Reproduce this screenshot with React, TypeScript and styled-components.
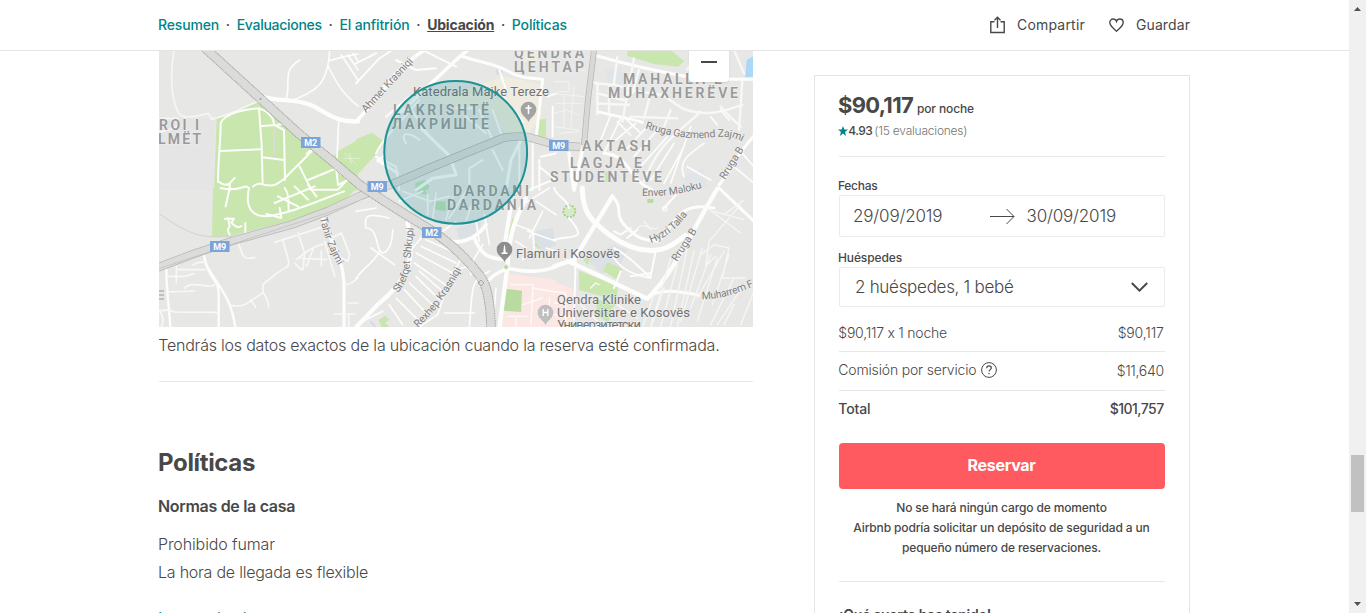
import React from "react";
import styled, { createGlobalStyle } from "styled-components";

const GlobalStyle = createGlobalStyle`
  *, *::before, *::after { box-sizing: border-box; }
  body {
    margin: 0;
    overflow: hidden;
    background: #fff;
    color: #484848;
    font-family: Inter, "Liberation Sans", sans-serif;
    font-feature-settings: "calt" 0;
  }
  h2, h3, p { margin: 0; }
`;

/* ---------- Frame ---------- */

const Screen = styled.div`
  display: grid;
  grid-template-columns: 1349px 17px;
  height: 613px;
  overflow: hidden;
`;

const Page = styled.div`
  display: flex;
  flex-direction: column;
  height: 613px;
  overflow: hidden;
`;

const ScrollTrack = styled.div`
  display: flex;
  flex-direction: column;
  align-items: center;
  background: #f0f0f0;
`;

const ScrollThumb = styled.div`
  width: 13px;
  height: 57px;
  margin: 438px 0 84px;
  background: #c1c1c1;
`;

const ScrollArrow = styled.svg`
  display: block;
  width: 17px;
  height: 17px;
  fill: #505050;
`;

/* ---------- Header ---------- */

const Header = styled.header`
  display: flex;
  justify-content: space-between;
  align-items: center;
  flex: none;
  height: 51px;
  padding: 0 159px 0 158px;
  border-bottom: 1px solid #e4e4e4;
`;

const Nav = styled.nav`
  display: flex;
  font-size: 14px;
  line-height: 20px;
`;

const NavLink = styled.a<{ $active?: boolean; $ls: number }>`
  color: ${(p) => (p.$active ? "#484848" : "#008489")};
  font-weight: ${(p) => (p.$active ? 700 : 500)};
  text-decoration: ${(p) => (p.$active ? "underline" : "none")};
  text-underline-offset: 1px;
  letter-spacing: ${(p) => p.$ls}px;
`;

const Dot = styled.span`
  width: 17.7px;
  text-align: center;
  font-weight: 500;
`;

const Actions = styled.div`
  display: flex;
  gap: 24px;
`;

const Action = styled.button<{ $ls: number }>`
  display: flex;
  align-items: center;
  gap: 12px;
  padding: 0;
  border: 0;
  background: none;
  color: #484848;
  font: 400 14px/20px Inter, "Liberation Sans", sans-serif;
  letter-spacing: ${(p) => p.$ls}px;
`;

const ActionIcon = styled.svg`
  display: block;
  width: 15px;
  height: 18px;
  fill: none;
  stroke: #484848;
  stroke-width: 1.4;
`;

/* ---------- Main column ---------- */

const Content = styled.main`
  display: grid;
  grid-template-columns: 594px 376px;
  column-gap: 61px;
  align-items: start;
  padding-left: 159px;
`;

const Column = styled.section`
  display: flex;
  flex-direction: column;
`;

const MapFrame = styled.div`
  position: relative;
  height: 276px;
  overflow: hidden;
`;

const MapSvg = styled.svg`
  display: block;
  width: 594px;
  height: 276px;
`;

const ZoomOut = styled.button`
  position: absolute;
  top: -9px;
  left: 530px;
  display: grid;
  place-items: center;
  width: 40px;
  height: 40px;
  padding: 0;
  border: 0;
  border-radius: 4px;
  background: #fff;
  box-shadow: 0 1px 2px rgba(0, 0, 0, 0.1);

  &::before {
    content: "";
    width: 16px;
    height: 2px;
    background: #484848;
  }
`;

const Caption = styled.p`
  margin: 6px 0 0 -0.8px;
  font-size: 16px;
  font-weight: 300;
  line-height: 24px;
  letter-spacing: -0.21px;
  white-space: nowrap;
`;

const Divider = styled.hr<{ $top: number; $bottom: number }>`
  width: 100%;
  height: 1px;
  margin: ${(p) => p.$top}px 0 ${(p) => p.$bottom}px;
  border: 0;
  background: #e8e8e8;
`;

const Policies = styled.div`
  display: flex;
  flex-direction: column;
  margin-left: -1px;
`;

const SectionTitle = styled.h2`
  font-size: 24px;
  font-weight: 700;
  line-height: 32px;
  letter-spacing: -0.34px;
`;

const SubTitle = styled.h3`
  margin: 15px 0 12px;
  font-size: 16px;
  font-weight: 600;
  line-height: 24px;
  letter-spacing: -0.31px;
`;

const Rule = styled.p<{ $ls: number }>`
  font-size: 16px;
  font-weight: 300;
  line-height: 28px;
  letter-spacing: ${(p) => p.$ls}px;
`;

const MoreLink = styled.a`
  margin-top: 20px;
  color: #008489;
  font-size: 16px;
  line-height: 24px;
`;

/* ---------- Booking card ---------- */

const Card = styled.aside`
  display: flex;
  flex-direction: column;
  height: 700px;
  margin-top: 24px;
  padding: 14px 24px;
  border: 1px solid #e4e4e4;
`;

const PriceLine = styled.div`
  display: flex;
  align-items: baseline;
  gap: 4px;
  height: 30px;
  margin-left: -1px;
  line-height: 30px;
  font-size: 12px;
  font-weight: 500;
  letter-spacing: -0.13px;
`;

const Price = styled.strong`
  font-size: 22px;
  font-weight: 700;
  letter-spacing: -0.72px;
`;

const Rating = styled.div`
  display: flex;
  align-items: center;
  height: 22px;
  margin-left: -1px;
  line-height: 20px;
  font-size: 12px;
  color: #767676;
  font-weight: 300;
  letter-spacing: -0.22px;
`;

const StarIcon = styled.svg`
  width: 10px;
  height: 10px;
  fill: #008489;
`;

const Score = styled.span`
  margin: 0 2px 0 0.2px;
  color: #484848;
  font-weight: 500;
  letter-spacing: -0.5px;
`;

const FieldLabel = styled.div<{ $ls: number }>`
  margin-left: -1px;
  font-size: 12px;
  font-weight: 500;
  line-height: 18px;
  letter-spacing: ${(p) => p.$ls}px;
`;

const DateField = styled.div`
  display: grid;
  grid-template-columns: 136.5px 37px auto;
  align-items: center;
  height: 42px;
  margin-bottom: 12px;
  padding-left: 13px;
  border: 1px solid #ebebeb;
  border-radius: 2px;
  font-size: 17px;
  font-weight: 300;
  letter-spacing: -0.17px;
`;

const ArrowIcon = styled.svg`
  width: 25px;
  height: 16px;
  fill: none;
  stroke: #484848;
  stroke-width: 1;
`;

const GuestField = styled.div`
  display: flex;
  align-items: center;
  justify-content: space-between;
  height: 40px;
  margin-bottom: 16px;
  padding: 0 16px 0 15px;
  border: 1px solid #ebebeb;
  border-radius: 2px;
  font-size: 17px;
  font-weight: 300;
  letter-spacing: -0.29px;
`;

const ChevronIcon = styled.svg`
  width: 17px;
  height: 10px;
  fill: none;
  stroke: #484848;
  stroke-width: 2;
`;

const CostRow = styled.div<{ $strong?: boolean }>`
  display: flex;
  justify-content: space-between;
  align-items: center;
  height: 20px;
  padding-right: 1.3px;
  font-size: 14px;
  line-height: 20px;
  font-weight: ${(p) => (p.$strong ? 500 : 300)};
`;

const CostLabel = styled.span<{ $ls: number; $lift?: boolean }>`
  display: flex;
  align-items: center;
  gap: 5px;
  margin: 0 0 ${(p) => (p.$lift ? 2 : 0)}px -0.7px;
  letter-spacing: ${(p) => p.$ls}px;
`;

const CostValue = styled.span<{ $ls: number }>`
  letter-spacing: ${(p) => p.$ls}px;
`;

const HelpIcon = styled.svg`
  width: 16px;
  height: 16px;
  fill: none;
  stroke: #484848;
`;

const ReserveButton = styled.button`
  flex: none;
  height: 46px;
  margin: 24px 0 9px;
  padding: 0 1px 2px 0;
  border: 0;
  border-radius: 4px;
  background: #ff5a5f;
  color: #fff;
  font: 700 16px/24px Inter, "Liberation Sans", sans-serif;
  letter-spacing: -0.29px;
`;

const Notice = styled.p`
  margin-left: -1px;
  font-size: 12px;
  font-weight: 500;
  line-height: 20px;
  letter-spacing: -0.14px;
  text-align: center;
  white-space: nowrap;
`;

const LuckyTitle = styled.div`
  font-size: 14px;
  font-weight: 600;
  line-height: 20px;
  letter-spacing: -0.24px;
`;

/* ---------- Map drawing ---------- */

const TILE = {
  nw: "translate(158 50) scale(.33333)",
  n: "translate(356 50) scale(.33333)",
  ne: "translate(554 50) scale(.33333)",
  sw: "translate(158 188) scale(.33333)",
  s: "translate(356 188) scale(.33333)",
  se: "translate(554 188) scale(.33333)",
};

const Areas = () => (
  <>
    <g transform={TILE.nw}>
      <path fill="#c8e6ad" d="M176 208L250 180 295 155 345 185 420 250 520 325 545 300 600 270V420H168z" />
      <path fill="#e5e5e4" d="M0 205L170 208 166 420H0z" opacity=".6" />
    </g>
    <g transform={TILE.n}>
      <path fill="#c8e6ad" d="M0 268L48 248 85 275 62 312 0 378zM548 208h22v52h-26z" />
      <path fill="#f5eedb" d="M240 150l200-70 60 10 60 15-5 100-50 60-60-20-60-80-70 20zM490 0l60 0-10 40-50-5z" opacity=".65" />
      <circle cx="430" cy="65" r="10" fill="#d9dcde" />
      <path fill="#bfe0bb" d="M178 398l30-8 12 20-5 10h-37z" />
    </g>
    <g transform={TILE.ne}>
      <path fill="#c8e6ad" d="M220 0H350L390 34 372 50 300 42 220 18zM152 366l16-3-2 34-12-2z" />
      <path fill="#a9d8f8" d="M578 30l22-12v62l-26 2z" />
      <path fill="#dfe4e8" d="M150 60l50-10 10 50-45 5zM390 375l60-20 10 60-70 5z" opacity=".7" />
    </g>
    <g transform={TILE.sw}>
      <path fill="#c8e6ad" d="M165 0L162 148 215 145 400 97 490 68 560 35 598 0z" />
    </g>
    <g transform={TILE.s}>
      <path fill="#fbe7e4" d="M445 255L600 275V420H430z" />
      <path fill="#b8db9f" d="M444 302l54 6-3 64-52-4z" />
      <path fill="#c8e6ad" d="M470 90l8 3-16 50-6-2zM534 170l8-8 16 14-8 8zM68 395l20-12 12 12-12 10 12 12-20 10z" />
      <path fill="#dbe0e5" d="M300 120l80-20-30 50-40 5zM540 130l50-10 10 50-40 20-25-30z" />
      <path fill="#bfe0bb" d="M175 6h32l8 14-28-5zM232 40l36 0 2 30-38-6z" />
      <path stroke="#a9d2f0" strokeWidth="3" d="M42 400l20 20" />
    </g>
    <g transform={TILE.se}>
      <path fill="#fbe7e4" d="M0 280l60 25v115H0z" />
      <path fill="#dbe0e5" d="M100 215l80-45 40 15-30 70-50 0z" opacity=".8" />
      <path fill="#c8e6ad" d="M75 248l100 40 18 12-8 36-110-30zM160 222l46 22-16 32-42-28zM130 335l60 10-20 20-5 40-40-25zM88 213l14-5 4 18-8 4z" />
      <rect x="280" y="33" width="18" height="12" fill="#b8db9f" />
      <circle cx="46" cy="70" r="18" fill="#d5eac5" stroke="#9dcb84" strokeWidth="5" strokeDasharray="6 4" />
    </g>
  </>
);

const Roads = () => (
  <g fill="none" stroke="#fdfdfc" strokeLinejoin="round" strokeLinecap="round">
    <g transform={TILE.nw}>
      <path strokeWidth="5" d="M48 0C35 80 40 150 62 190c20 22 65 5 88 0l15 18M160 208C220 195 260 170 298 155M0 205h60M0 248q25-5 60-20" stroke="#f6f6f5" />
      <path strokeWidth="6" d="M180 395c0-60 8-120 8-175 10-30 80-45 115-45 30 10 45 30 45 48M303 175l8 110 3 118M188 303l118-5M311 228l45-3 25-5M311 322l68 8M350 225l28 15 3 150M181 395q20 15 35 5M285 410q15-15 35-5c35 5 40-5 60-20l70-70 20-22M425 350l35 70M450 390l80-33 40 30-30 32-80 0M535 360l5 45 30-15M215 420v-20l15-16" />
      <path strokeWidth="5" stroke="#dcdcda" d="M348 235v78" />
      <path strokeWidth="13" d="M320 142C370 155 420 145 465 168s70 50 135 46" />
      <path strokeWidth="5" d="M410 148c60-25 100-40 105-148M510 48c25 50 45 85 90 120M542 215l-5 108M385 145c15-50-15-80 40-115M514 32l45-12 41-8M550 15l50 75M570 15l30 45M585 10l15 22M445 312l10-10 10 2" />
      <path strokeWidth="3" d="M555 325h50M560 310l34 32M575 310l4 30" stroke="#dff0d0" />
    </g>
    <g transform={TILE.n}>
      <path strokeWidth="11" d="M0 214C60 160 85 80 205 0M120 200L300 30 335 0" />
      <path strokeWidth="6" d="M0 100l70-75L110 0M30 175l130-130M90 200l70-60M60 310c25-50 70-90 130-160M65 335l20-20M160 170c40 60 60 100 125 150M0 40l60-30M120 30l60 30 60-5M200 0l100 50" />
      <path strokeWidth="9" d="M315 18c60 20 100 22 140 45s60 20 105 25M560 88l-20 180M195 235l85 82 20 55M300 375l-70 10-50 35M495 270l-30 60-15 90M65 330l60 40" />
      <path strokeWidth="6" d="M370 180l40 90M330 200l60 50M410 180l25 70M440 140l60 75M490 265l0 155M530 280l0 140M150 280c-25-40 20-30 40-10M555 320l45-10M380 330l-40 25v60M410 300l30 60M300 175l50 0M575 140l25-10M590 170v90M430 60l20 60M550 330v90M60 320l60 30 10 70M550 350l50 40M520 420l80-35" />
    </g>
    <g transform={TILE.ne}>
      <path strokeWidth="9" d="M130 18c70 20 150 40 260 60 60 10 110 10 210 10M130 185c60 15 100 20 135 32M150 310c50 5 65 30 85 60s40 40 60 50M495 405c40-50 60-100 105-148" />
      <path strokeWidth="7" d="M115 98h15v95M125 100l60 5 70 20 70 10 60 40c80 30 130 5 180-10M190 20l-10 80M240 25l-35 190M290 130l-20 75M350 180l-20 50M440 185c-60 60-120 80-170 210M500 170c30 35 40 40 60 60M230 200l140 5M130 160l95 5M130 130l80 20M165 110l0 80M255 60l-20 70M565 90l-10 150M400 60l20 -40 60-20M430 20l40 70M540 0l30 70" stroke="#f8f8f7" />
      <path strokeWidth="5" d="M170 195l-40 100M200 205l-50 105M185 270l60-50M215 300l60-65M240 320l70-80M260 350l80-90M290 390l70-110M330 400l60-110M390 380c-20-50 20-70 60-100M400 350l70 40M540 350l60 50M565 310l35 40M410 230l-60 170M470 200l20 25M500 180l25 30M190 215l40 40M215 205l45 45" />
      <path strokeWidth="2.5" stroke="#f5f5f4" d="M0 95h45v30h-30M0 130l90 10M5 160h80M0 190l35-10 40 15M30 135v95M60 110l-10 120M0 230l75 10M15 250l60-5M75 60l20 2" />
      <path strokeWidth="11" d="M85 300l-25 120M45 310l15 110" />
    </g>
    <g transform={TILE.sw}>
      <path strokeWidth="6" d="M215 0l-12 55M188 0c60 15 70-15 85 0-15 70 20 85 50 85 60-5 130-35 235-75M325 78l45 12-5-30M380 0c15 20 10 40 12 70M350 45L470-5M360 25l60 30M410-5l40 40M450-10l25 35M210 90l5 25q-10 10 0 25M200 92l28 0-8 12q18 20 30 10M262 105v30" />
      <path strokeWidth="10" d="M488 72l10 30c20 60 55 100 60 180v140" stroke="#fdfdfc" />
      <path strokeWidth="7" d="M137 195c15 90 45 70 45 125v100M140 220c30 65 80 100 92 200M25 240c0 70 10 130 12 180" />
      <path strokeWidth="5" d="M240 165c15 25 5 55 50 43M350 163l140-45M375 157c10 45 25 70 12 80-30 15-50 35-72 52v25c-50 35-60 45-95 38M315 312c10 15 15 30 17 45M278 335l15 22M0 370q30-8 50 2l130 1M30 265h50l28-8M55 235v50M60 245h80M105 230q20-10 40-8M30 312l80-3M80 300c20-25 80 5 90-10M5 370c15 20 10 40 5 45M420 135l20 60-25 20M440 195c20-15 40-25 70-30M440 195l-5 50M465 185l-20 50M490 190v45M410 225l20 20M425 210l80 5M520 150l30-15 25 65-5 20-30-15M560 290c20 0 25-10 40-20M530 378h60M570 345h30M572 380v35M500 160l30 105" stroke="#f8f8f7" />
    </g>
    <g transform={TILE.s}>
      <path strokeWidth="13" d="M0 418L65 350C180 255 160 200 165 170l-10-65" />
      <path strokeWidth="5" d="M30 120c-10-50 20-40 70-30M30 120c30 0 30 40 40 65s40 0 40-60M0 270c40-50 50-40 70-80M45 180l70 50M120 330l80 80M145 305l70 75M160 285l80 75M180 265l70 70M190 250l70 60M175 225l100 70M180 195l110 60M195 175l105 50M210 155l90 40M170 180l25-30M100 350l40 60M20 400l60-30M315 210l-50 110-20 60-60 40M400 250c-60 30-50 50-60 170M265 375h90M315 240q30-10 30 20M380 170l-30 50M420 300l-10 120M300 100l-40 30M0 70l60-10" />
      <path strokeWidth="11" d="M240 140c70 50 130 0 150-30M355 150c20 50 40 60 90 65M400 275c30-30 60-35 80-30s80 10 120-10" />
      <path strokeWidth="13" d="M510 30c-30 60-50 100-55 200l-25 190" />
      <path strokeWidth="12" d="M465 50l-25 160" />
      <path strokeWidth="5" d="M360 100l10 60M385 80l15 90M480 110l50 20 5 60M515 130l85 30M540 40l60 40M560 70l-40 80M500 50l80-50M570 180l30 10M480 160l30 20-10 35M200 10l-70 30M215 20l0 60M240 15l-10 80M290 25l-20 70M140 10l80 30 60-15M330 10l-50 80M350 40l-20 60" />
      <path strokeWidth="4" stroke="#fffaf8" d="M465 290h65v35M530 300l70 12M500 350l60-20M530 310l-5 100M455 385h60M580 330v40M480 390v25" />
    </g>
    <g transform={TILE.se}>
      <path strokeWidth="15" d="M85 0c0 40 10 80 40 105 50 50 110 80 160 82 50 5 80-25 110-45" />
      <path strokeWidth="13" d="M40 220c50 20 150 70 240 112 80-80 110-160 210-330M175 25L60 215 0 235" />
      <path strokeWidth="9" d="M175 25c40 40-5 50 50 100 30 30 50 30 90 35 50-60 60-120 165-100M275 332c40-30 90-25 160-10M495 0l105 100" />
      <path strokeWidth="6" d="M180 180c40 20 80 60 110 90-60-10-90-30-110-60M305 190l-15 75M0 0c10 30 40 30 45 60M45 90c60 70 10 50-45 65M230 120l-30 20-20-10M250 125l-30 25M330 60l55-60M65 215l-5 180M200 250l-20 50M230 265l60 -10" />
      <path strokeWidth="4" stroke="#f6f6f5" d="M300 320l-35 100M330 300l-40 120M350 210l-60 205M370 230l-50 185M400 180l-50 235M420 190l-50 225M445 180l-65 220M470 200l-60 160M490 210l-60 190M510 190l-80 140M525 200l-50 150M540 270l-70 140M570 290l-80 120M460 60l100 75M480 70l90 25M560 50l-95 110-10 75 30-30M440 200l40-30 45 10-20 90 70 0M510 80l60-45M540 350l-30 60M600 310l-40 100M250 120c20-20 40 10 60 0M270 100l20 25" />
      <circle cx="332" cy="62" r="6" strokeWidth="4" />
      <path strokeWidth="4" stroke="#fffaf8" d="M0 310l35 5v90M0 345h60M40 330l-10 50M110 300l15-15 10 5M0 380l50 5M80 350l50 50M190 350l60 40" />
    </g>
  </g>
);

const M9_PATH = "M158 267.500L192 254.500 232 241 292 224.500 328 211 360 196 378 189C398 183 400 180 449 160L503 138Q520 135 530 137.500L556 145 580 147";
const M2_PATH = "M205 48L262 100 298 133 332 161 360 185C382 200 398 210 426 227 450 242 468 260 480 276Q490 288 491 327";

const Highways = () => (
  <g fill="none" strokeLinejoin="round">
    <path d={M9_PATH} stroke="#b5b5b5" strokeWidth="8.4" />
    <path d={M9_PATH} stroke="#dcdcdb" strokeWidth="7" />
    <path d="M594 50L588 100 584 145" stroke="#b5b5b5" strokeWidth="6" />
    <path d="M594 50L588 100 584 145" stroke="#d8d8d7" strokeWidth="4.6" />
    <path d={M2_PATH} stroke="#a0a0a0" strokeWidth="9.6" strokeDasharray="1.2 .5" />
    <path d={M2_PATH} stroke="#dbdbda" strokeWidth="7.8" />
    <path d="M158 213C190 235 200 239 235 236" stroke="#d2d2d1" strokeWidth="1" />
    <path d="M158 269L230 245 330 212 358 201" stroke="#bcbcbc" strokeWidth=".7" />
    <circle cx="260.500" cy="99" r="1" fill="#a0a0a0" />
    <path d="M478 283l3-3 3 3-3 3z" stroke="#a9a9a9" strokeWidth="1" />
  </g>
);

type MapLabel = [text: string, x: number, y: number, width: number];

const AREA_LABELS: MapLabel[] = [
  ["QENDRA", 514, 58, 70],
  ["ЦЕНТАР", 514, 72, 70],
  ["MAHALLA E", 623, 84, 99],
  ["MUHAXHERËVE", 608, 98, 130],
  ["ROI I", 159, 130, 40],
  ["LMËT", 158, 144, 43],
  ["LAKRISHTË", 393, 115, 96],
  ["ЛАКРИШТЕ", 392, 129, 97],
  ["AKTASH", 582, 151, 69],
  ["LAGJA E", 570, 168, 72],
  ["STUDENTËVE", 550, 182, 112],
  ["DARDANI", 453, 196, 76],
  ["DARDANIA", 447, 210, 89],
];

const PLACE_LABELS: MapLabel[] = [
  ["Katedrala Majke Tereze", 413, 96, 136],
  ["Flamuri i Kosovës", 516, 257.5, 104],
  ["Qendra Klinike", 557, 303.5, 84],
  ["Universitare e Kosovës", 557, 317, 133],
  ["Универзитетски", 557, 329, 84],
];

const SHIELDS: [string, number, number][] = [
  ["M2", 301, 137],
  ["M9", 367.5, 181],
  ["M9", 549, 140],
  ["M2", 422, 227],
  ["M9", 210, 241],
];

const STREETS: { id: string; d: string; name: string; len: number }[] = [
  { id: "ahmet", d: "M366 113L412 63 422 52", name: "Ahmet Krasniqi", len: 70 },
  { id: "gazmend", d: "M645 128.500C672 137 690 139.500 710 137.500S735 138 745 143", name: "Rruga Gazmend Zajmi", len: 99 },
  { id: "rrugab1", d: "M725 180L744 149 754 132", name: "Rruga B", len: 36 },
  { id: "rrugab2", d: "M677 262L697 231 708 214", name: "Rruga B", len: 37 },
  { id: "enver", d: "M642 196Q672 197 702 188L712 185", name: "Enver Maloku", len: 61 },
  { id: "hyzri", d: "M651 243Q672 236 687 215L694 205", name: "Hyzri Talla", len: 47 },
  { id: "tahir", d: "M320 218Q325 243 339 267L344 278", name: "Tahir Zajmi", len: 51 },
  { id: "shefqet", d: "M398 293Q409 280 410 262L414 226V216", name: "Shefqet Shkupi", len: 68 },
  { id: "rexhep", d: "M418 328Q442 305 461 270L466 258", name: "Rexhep Krasniqi", len: 73 },
  { id: "muharrem", d: "M702 299Q724 300 754 286L780 276", name: "Muharrem Fejza", len: 72 },
];

const MapLabels = () => (
  <g fontFamily="Roboto, sans-serif" stroke="#f2f2f1" strokeWidth="1.4" strokeOpacity=".6" style={{ paintOrder: "stroke" }}>
    <g fontSize="14" fontWeight="600" fill="#999">
      {AREA_LABELS.map(([text, x, y, width]) => (
        <text key={text} x={x} y={y} textLength={width}>{text}</text>
      ))}
    </g>
    <g fontSize="13" fill="#727272">
      {PLACE_LABELS.map(([text, x, y, width]) => (
        <text key={text} x={x} y={y} textLength={width}>{text}</text>
      ))}
    </g>
    <g fontSize="10.5" fill="#808080">
      {STREETS.map((s) => (
        <React.Fragment key={s.id}>
          <path id={s.id} d={s.d} fill="none" stroke="none" />
          <text textLength={s.len}>
            <textPath href={`#${s.id}`} textLength={s.len}>{s.name}</textPath>
          </text>
        </React.Fragment>
      ))}
    </g>
  </g>
);

const Shields = () => (
  <g fontFamily="Roboto, sans-serif" fontSize="9" fontWeight="700" textAnchor="middle">
    {SHIELDS.map(([name, x, y], i) => (
      <g key={i}>
        <rect x={x} y={y} width="19.500" height="11" fill="#7aa5da" />
        <text x={x + 9.7} y={y + 8.8} fill="#fff" textLength="13">{name}</text>
      </g>
    ))}
  </g>
);

const PIN = "M0 12.500C-1.500 8-7.800 6-7.800 0A7.800 7.800 0 0 1 7.800 0C7.800 6 1.500 8 0 12.500z";

const Pins = () => (
  <g>
    <g transform="translate(528.500 109.500)">
      <path d={PIN} fill="#a3a3a3" />
      <path d="M0-4.500V4.500M-3-1.500H3" stroke="#fff" strokeWidth="1.500" />
    </g>
    <g transform="translate(504.500 249.500)">
      <path d={PIN} fill="#8d8d8d" />
      <path d="M-3 4.500V3H-1.200L-.6-3 0-5 .6-3 1.200 3H3V4.500z" fill="#fff" />
    </g>
    <g transform="translate(545.500 312.500)">
      <path d={PIN} fill="#bfbfbf" />
      <path d="M-2.300-3.500V3.500M2.300-3.500V3.500M-2.300 0H2.300" stroke="#fff" strokeWidth="1.300" />
    </g>
    <circle cx="506" cy="267" r="2.400" fill="#b4d59b" stroke="#eef5ea" />
  </g>
);

const LocationMap = () => (
  <MapFrame>
    <MapSvg viewBox="159 51 594 276">
      <rect x="159" y="51" width="594" height="276" fill="#e7e7e6" />
      <Areas />
      <Roads />
      <Highways />
      <path d="M159 291h5M159 295h5M159 299h5" stroke="#999" />
      <MapLabels />
      <Pins />
      <Shields />
      <circle cx="455.700" cy="152.300" r="71.400" fill="#008489" fillOpacity=".17" stroke="#1d9295" strokeWidth="2" />
    </MapSvg>
    <ZoomOut aria-label="Alejar" />
  </MapFrame>
);

/* ---------- Page ---------- */

const Bookings = () => (
  <Card>
    <PriceLine>
      <Price>$90,117</Price>
      <span>por noche</span>
    </PriceLine>
    <Rating>
      <StarIcon viewBox="0 0 20 20">
        <path d="M10 0l2.700 7.200H20l-5.900 4.600L16.300 20 10 15.200 3.700 20l2.200-8.200L0 7.200h7.300z" />
      </StarIcon>
      <Score>4.93</Score>
      <span>(15 evaluaciones)</span>
    </Rating>
    <Divider $top={14} $bottom={20} />

    <FieldLabel $ls={-0.3}>Fechas</FieldLabel>
    <DateField>
      <span>29/09/2019</span>
      <ArrowIcon viewBox="0 0 25 16">
        <path d="M0 8.500H24M16.500 1L24 8.500 16.500 16" />
      </ArrowIcon>
      <span>30/09/2019</span>
    </DateField>

    <FieldLabel $ls={-0.12}>Huéspedes</FieldLabel>
    <GuestField>
      <span>2 huéspedes, 1 bebé</span>
      <ChevronIcon viewBox="0 0 17 10">
        <path d="M.8 1L8.500 8.600 16.200 1" />
      </ChevronIcon>
    </GuestField>

    <CostRow>
      <CostLabel $ls={-0.24}>$90,117 x 1 noche</CostLabel>
      <CostValue $ls={-0.16}>$90,117</CostValue>
    </CostRow>
    <Divider $top={8} $bottom={9} />
    <CostRow>
      <CostLabel $ls={-0.17} $lift>
        Comisión por servicio
        <HelpIcon viewBox="0 0 16 16">
          <circle cx="8" cy="8" r="7.400" />
          <path strokeWidth="1.200" d="M5.700 6.200C5.700 4.700 6.600 3.900 8 3.900S10.300 4.800 10.300 6C10.300 7.600 8 7.700 8 9.600M8 10.900V12.200" />
        </HelpIcon>
      </CostLabel>
      <CostValue $ls={-0.33}>$11,640</CostValue>
    </CostRow>
    <Divider $top={9} $bottom={8} />
    <CostRow $strong>
      <CostLabel $ls={-0.16}>Total</CostLabel>
      <CostValue $ls={-0.53}>$101,757</CostValue>
    </CostRow>

    <ReserveButton>Reservar</ReserveButton>
    <Notice>
      No se hará ningún cargo de momento
      <br />
      Airbnb podría solicitar un depósito de seguridad a un
      <br />
      pequeño número de reservaciones.
    </Notice>
    <Divider $top={23} $bottom={23} />
    <LuckyTitle>¡Qué suerte has tenido!</LuckyTitle>
  </Card>
);

export default function App() {
  return (
    <>
      <GlobalStyle />
      <Screen>
        <Page>
          <Header>
            <Nav>
              <NavLink $ls={-0.16}>Resumen</NavLink>
              <Dot>·</Dot>
              <NavLink $ls={-0.29}>Evaluaciones</NavLink>
              <Dot>·</Dot>
              <NavLink $ls={-0.14}>El anfitrión</NavLink>
              <Dot>·</Dot>
              <NavLink $active $ls={-0.19}>Ubicación</NavLink>
              <Dot>·</Dot>
              <NavLink $ls={-0.16}>Políticas</NavLink>
            </Nav>
            <Actions>
              <Action $ls={0.2}>
                <ActionIcon viewBox="0 0 15 18">
                  <path d="M4.500 5.700H.8V16.500H14.200V5.700H10.500M7.500 12V1.500M4.500 4.300L7.500 1.300 10.500 4.300" />
                </ActionIcon>
                Compartir
              </Action>
              <Action $ls={0.1}>
                <ActionIcon viewBox="0 0 15 18">
                  <path d="M7.500 15.200C5 13 .8 10 .8 6.600.8 4.400 2.400 3 4.200 3 5.700 3 7 3.900 7.500 5.300 8 3.900 9.300 3 10.800 3 12.600 3 14.200 4.400 14.200 6.600 14.200 10 10 13 7.500 15.200z" />
                </ActionIcon>
                Guardar
              </Action>
            </Actions>
          </Header>

          <Content>
            <Column>
              <LocationMap />
              <Caption>Tendrás los datos exactos de la ubicación cuando la reserva esté confirmada.</Caption>
              <Divider $top={24} $bottom={65} />
              <Policies>
                <SectionTitle>Políticas</SectionTitle>
                <SubTitle>Normas de la casa</SubTitle>
                <Rule $ls={-0.11}>Prohibido fumar</Rule>
                <Rule $ls={-0.23}>La hora de llegada es flexible</Rule>
                <MoreLink>Leer todas las normas</MoreLink>
              </Policies>
            </Column>
            <Bookings />
          </Content>
        </Page>

        <ScrollTrack>
          <ScrollArrow viewBox="0 0 17 17">
            <path d="M5 11L8.500 7 12 11z" />
          </ScrollArrow>
          <ScrollThumb />
          <ScrollArrow viewBox="0 0 17 17">
            <path d="M5 6L8.500 10 12 6z" />
          </ScrollArrow>
        </ScrollTrack>
      </Screen>
    </>
  );
}
